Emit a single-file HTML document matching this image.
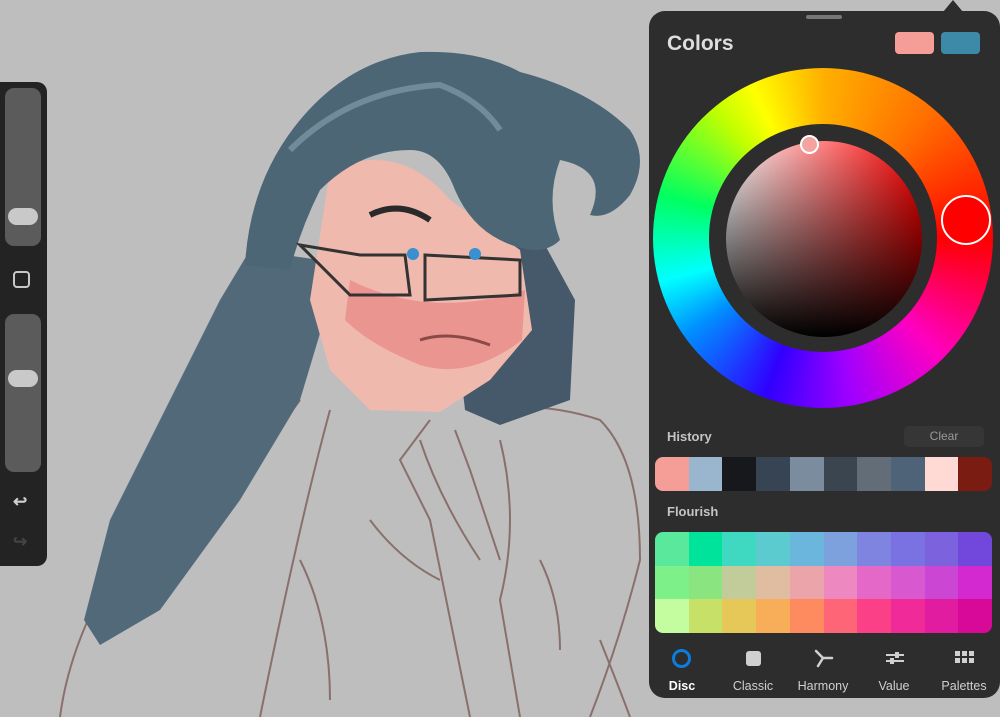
<!DOCTYPE html>
<html><head><meta charset="utf-8"><style>
html,body{margin:0;padding:0;width:1000px;height:717px;overflow:hidden;background:#bebebe;font-family:"Liberation Sans",sans-serif}
.abs{position:absolute}
#side{left:0;top:82px;width:47px;height:484px;background:#232323;border-radius:0 10px 10px 0}
.sl{position:absolute;left:5px;width:36px;background:#5b5b5b;border-radius:9px}
.knob{position:absolute;left:3px;width:30px;height:17px;background:#c9c9c9;border-radius:9px}
#panel{left:649px;top:11px;width:351px;height:687px;background:#2d2d2d;border-radius:16px}
.lbl{color:#c4c4c4;font-size:13px;font-weight:bold}
.tab{position:absolute;top:668px;color:#d0d0d0;font-size:12.5px;text-align:center;width:70px}
</style></head><body>
<svg class="abs" style="left:0;top:0" width="1000" height="717" viewBox="0 0 1000 717">
<g fill="none" stroke="#8a706c" stroke-width="2">
<path d="M300 400 Q250 470 180 520 L120 560 Q70 640 60 717"/>
<path d="M330 410 Q300 520 260 717"/>
<path d="M470 410 Q540 400 600 420 Q640 460 640 560 Q620 640 590 717"/>
<path d="M430 420 L400 460 L430 520 L470 717"/>
<path d="M420 440 Q440 500 480 560"/>
<path d="M455 430 L470 470 L500 560"/>
<path d="M500 440 Q520 520 500 600 L520 717"/>
<path d="M300 560 Q330 620 330 700"/>
<path d="M370 520 Q400 560 440 580"/>
<path d="M540 560 Q560 600 560 650"/>
<path d="M600 640 Q620 690 630 717"/>
</g>
<path d="M250 250 L320 260 L330 300 L300 400 L240 500 L160 610 L100 645 L84 620 L110 520 L170 400 L220 300 Z" fill="#526979"/>
<path d="M460 240 L545 245 L575 300 L570 400 L500 425 L465 410 L455 320 Z" fill="#46596a"/>
<path d="M330 170 Q400 140 450 200 L520 250 L532 330 L490 380 L440 412 L370 410 L330 370 L310 300 Z" fill="#efb9ae"/>
<path d="M350 280 Q430 320 525 290 L522 340 Q470 380 420 365 Q370 345 345 320Z" fill="#ea8a86" opacity=".75"/>
<path d="M245 265 Q250 180 300 120 Q350 60 420 52 Q480 50 520 72 Q590 90 630 130 Q650 160 630 195 Q610 220 590 215 Q610 170 560 160 Q545 200 560 240 Q540 260 500 240 Q470 225 455 190 Q440 150 410 150 Q360 150 320 190 Q300 230 290 270 Z" fill="#4c6676"/>
<path d="M290 150 Q350 90 440 85 Q480 100 500 130" stroke="#8ba4b2" stroke-width="6" fill="none" opacity=".6"/>
<path d="M300 245 L360 255 L405 255 L410 295 L350 295 Z M425 255 L520 260 L520 295 L425 300 Z" fill="none" stroke="#333" stroke-width="3"/>
<path d="M370 215 Q400 200 430 220" stroke="#2a2a2a" stroke-width="6" fill="none"/>
<circle cx="413" cy="254" r="6" fill="#3a8fd0"/><circle cx="475" cy="254" r="6" fill="#3a8fd0"/>
<path d="M420 340 Q450 330 490 345" stroke="#8a4a48" stroke-width="3" fill="none"/>
</svg>

<div id="side" class="abs">
<div class="sl" style="top:6px;height:158px"><div class="knob" style="top:120px"></div></div>
<div class="abs" style="left:13px;top:189px;width:17px;height:17px;border:2px solid #c8c8c8;border-radius:4px;box-sizing:border-box"></div>
<div class="sl" style="top:232px;height:158px"><div class="knob" style="top:56px"></div></div>
<div class="abs" style="left:13px;top:410px;color:#d0d0d0;font-size:17px;font-weight:bold">↩</div>
<div class="abs" style="left:13px;top:450px;color:#444;font-size:17px;font-weight:bold">↪</div>
</div>

<div class="abs" style="left:943px;top:0;width:0;height:0;border-left:10px solid transparent;border-right:10px solid transparent;border-bottom:12px solid #2d2d2d"></div>
<div id="panel" class="abs">
<div class="abs" style="left:157px;top:4px;width:36px;height:4px;background:#777;border-radius:2px"></div>
<div class="abs" style="left:18px;top:21px;color:#dedede;font-size:21px;font-weight:bold">Colors</div>
<div class="abs" style="left:246px;top:21px;width:39px;height:22px;background:#f59e98;border-radius:4px"></div>
<div class="abs" style="left:292px;top:21px;width:39px;height:22px;background:#3d8aa8;border-radius:4px"></div>
<div class="abs" style="left:4px;top:57px;width:340px;height:340px;border-radius:50%;background:conic-gradient(from 0deg,#ffb000 0deg,#ff7000 40deg,#ff0000 90deg,#ff00c0 135deg,#a000ff 170deg,#3000ff 200deg,#0090ff 235deg,#00ffff 255deg,#00ff60 285deg,#c0ff00 320deg,#ffff00 335deg,#ffb000 360deg)"></div>
<div class="abs" style="left:60px;top:113px;width:228px;height:228px;border-radius:50%;background:#2d2d2d"></div>
<div class="abs" style="left:77px;top:130px;width:196px;height:196px;border-radius:50%;background:linear-gradient(to bottom,rgba(0,0,0,0),#000),linear-gradient(to right,#fff,rgba(255,255,255,0) 100%),#ff0000"></div>
<div class="abs" style="left:151px;top:124px;width:19px;height:19px;border-radius:50%;background:#f4a4a0;border:2px solid #fff;box-sizing:border-box"></div>
<div class="abs" style="left:292px;top:184px;width:50px;height:50px;border-radius:50%;background:#ff0000;border:2px solid #fff;box-sizing:border-box"></div>
<div class="abs lbl" style="left:18px;top:418px">History</div>
<div class="abs" style="left:255px;top:415px;width:80px;height:21px;background:#363636;border-radius:5px;color:#999;font-size:12px;text-align:center;line-height:21px">Clear</div>
<div class="abs" style="left:6px;top:446px;width:337px;height:34px;border-radius:8px;overflow:hidden;display:flex">
<div style="flex:1;background:#f59e98"></div><div style="flex:1;background:#9ab6cf"></div><div style="flex:1;background:#16181b"></div><div style="flex:1;background:#364453"></div><div style="flex:1;background:#7a8c9e"></div><div style="flex:1;background:#3b4550"></div><div style="flex:1;background:#636d78"></div><div style="flex:1;background:#4e6378"></div><div style="flex:1;background:#ffd9d3"></div><div style="flex:1;background:#7a1c12"></div>
</div>
<div class="abs lbl" style="left:18px;top:493px">Flourish</div>
<div class="abs" style="left:6px;top:521px;width:337px;height:101px;border-radius:8px;overflow:hidden;display:grid;grid-template-columns:repeat(10,1fr);grid-template-rows:repeat(3,1fr)">
<div style="background:#5ae89c"></div><div style="background:#00e39b"></div><div style="background:#3fd8c0"></div><div style="background:#5ccbd0"></div><div style="background:#6bb6dc"></div><div style="background:#7ca1dc"></div><div style="background:#7e84e0"></div><div style="background:#7a72e2"></div><div style="background:#7c62dc"></div><div style="background:#7248dc"></div>
<div style="background:#7ef08a"></div><div style="background:#8ae480"></div><div style="background:#c2cc9a"></div><div style="background:#e0bca0"></div><div style="background:#eaa4aa"></div><div style="background:#ee88c0"></div><div style="background:#e468c8"></div><div style="background:#d858d0"></div><div style="background:#cc46d4"></div><div style="background:#d22ad0"></div>
<div style="background:#c4fca0"></div><div style="background:#c6e068"></div><div style="background:#e6c858"></div><div style="background:#f8ae58"></div><div style="background:#fe8a60"></div><div style="background:#fe6678"></div><div style="background:#fc4088"></div><div style="background:#f02a98"></div><div style="background:#e21ca0"></div><div style="background:#d80898"></div>
</div>
<div class="abs" style="left:23px;top:638px;width:19px;height:19px;border:3px solid #0a7de0;border-radius:50%;box-sizing:border-box"></div>
<div class="abs" style="left:97px;top:640px;width:15px;height:15px;background:#d0d0d0;border-radius:3px"></div>
<svg class="abs" style="left:163px;top:637px" width="22" height="20"><path d="M4 3 L11 10 L20 10 M11 10 L6 18" stroke="#d0d0d0" stroke-width="2.5" fill="none" stroke-linecap="round"/></svg>
<svg class="abs" style="left:235px;top:639px" width="22" height="16"><path d="M2 5 H20 M2 11 H20" stroke="#d0d0d0" stroke-width="2"/><rect x="11" y="2" width="4" height="6" fill="#d0d0d0"/><rect x="6" y="8" width="4" height="6" fill="#d0d0d0"/></svg>
<svg class="abs" style="left:306px;top:640px" width="20" height="15"><g fill="#d0d0d0"><rect x="0" y="0" width="5" height="5"/><rect x="7" y="0" width="5" height="5"/><rect x="14" y="0" width="5" height="5"/><rect x="0" y="7" width="5" height="5"/><rect x="7" y="7" width="5" height="5"/><rect x="14" y="7" width="5" height="5"/></g></svg>
<div class="tab" style="left:-2px;color:#fff;font-weight:bold">Disc</div>
<div class="tab" style="left:69px">Classic</div>
<div class="tab" style="left:139px">Harmony</div>
<div class="tab" style="left:210px">Value</div>
<div class="tab" style="left:280px">Palettes</div>
</div>
</body></html>
